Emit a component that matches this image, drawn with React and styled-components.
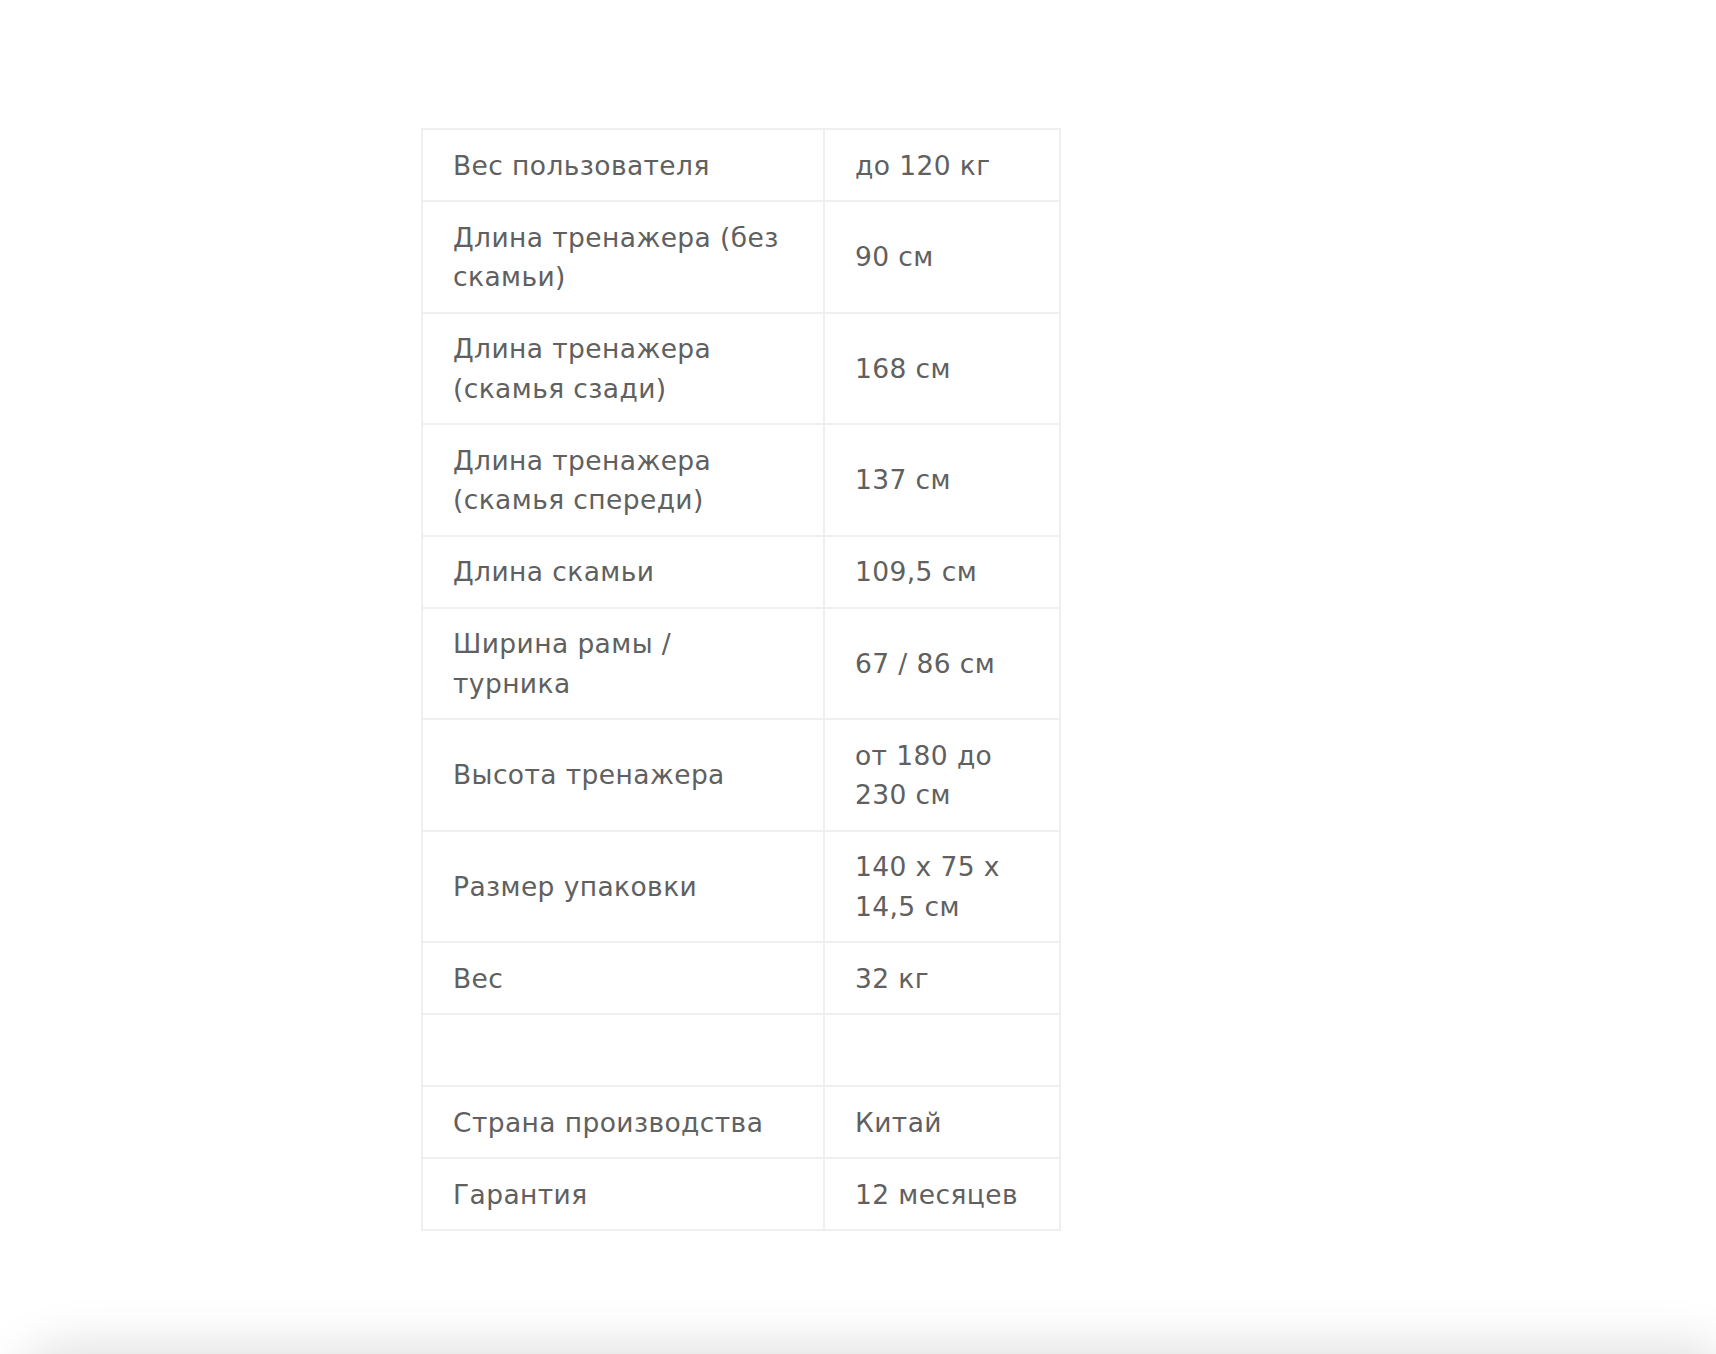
import React from "react";
import styled, { createGlobalStyle } from "styled-components";

const GlobalStyle = createGlobalStyle`
  html, body {
    margin: 0;
    padding: 0;
    background: #fff;
    overflow: hidden;
  }
  body {
    font-family: "DejaVu Sans", "Liberation Sans", sans-serif;
  }
`;

const Page = styled.div`
  min-height: 1354px;
  padding-top: 128px;
  padding-left: 421px;
  box-sizing: border-box;
`;

const SpecTable = styled.table`
  border-collapse: collapse;
  border: 2px solid #efefef;
  width: 638px;
  table-layout: fixed;
`;

const Cell = styled.td`
  box-sizing: border-box;
  width: ${(p) => p.$width}px;
  height: ${(p) => (p.$empty ? 72 : 0)}px;
  border: 2px solid #efefef;
  padding: 15.5px 8px 15px 30px;
  font-size: 26.5px;
  line-height: 39.5px;
  color: #606060;
  vertical-align: middle;
  letter-spacing: 0.4px;
  white-space: nowrap;
`;

const BottomPanel = styled.div`
  height: 200px;
  margin: 0 0 0 12px;
  border-radius: 60px 0 0 0;
  background: #fff;
  box-shadow: 0 -8px 50px rgba(0, 0, 0, 0.13);
`;

const specs = [
  [["Вес пользователя"], ["до 120 кг"]],
  [["Длина тренажера (без", "скамьи)"], ["90 см"]],
  [["Длина тренажера", "(скамья сзади)"], ["168 см"]],
  [["Длина тренажера", "(скамья спереди)"], ["137 см"]],
  [["Длина скамьи"], ["109,5 см"]],
  [["Ширина рамы /", "турника"], ["67 / 86 см"]],
  [["Высота тренажера"], ["от 180 до", "230 см"]],
  [["Размер упаковки"], ["140 х 75 х", "14,5 см"]],
  [["Вес"], ["32 кг"]],
  [[""], [""]],
  [["Страна производства"], ["Китай"]],
  [["Гарантия"], ["12 месяцев"]],
];

function Lines({ lines }) {
  return lines.map((line, i) => (
    <React.Fragment key={i}>
      {i > 0 && <br />}
      {line}
    </React.Fragment>
  ));
}

export default function App() {
  return (
    <>
      <GlobalStyle />
      <Page>
        <SpecTable>
          <tbody>
            {specs.map(([name, value], i) => (
              <tr key={i}>
                <Cell $width={402} $empty={!name[0]}>
                  <Lines lines={name} />
                </Cell>
                <Cell $width={236} $empty={!name[0]}>
                  <Lines lines={value} />
                </Cell>
              </tr>
            ))}
          </tbody>
        </SpecTable>
      </Page>
      <BottomPanel />
    </>
  );
}
